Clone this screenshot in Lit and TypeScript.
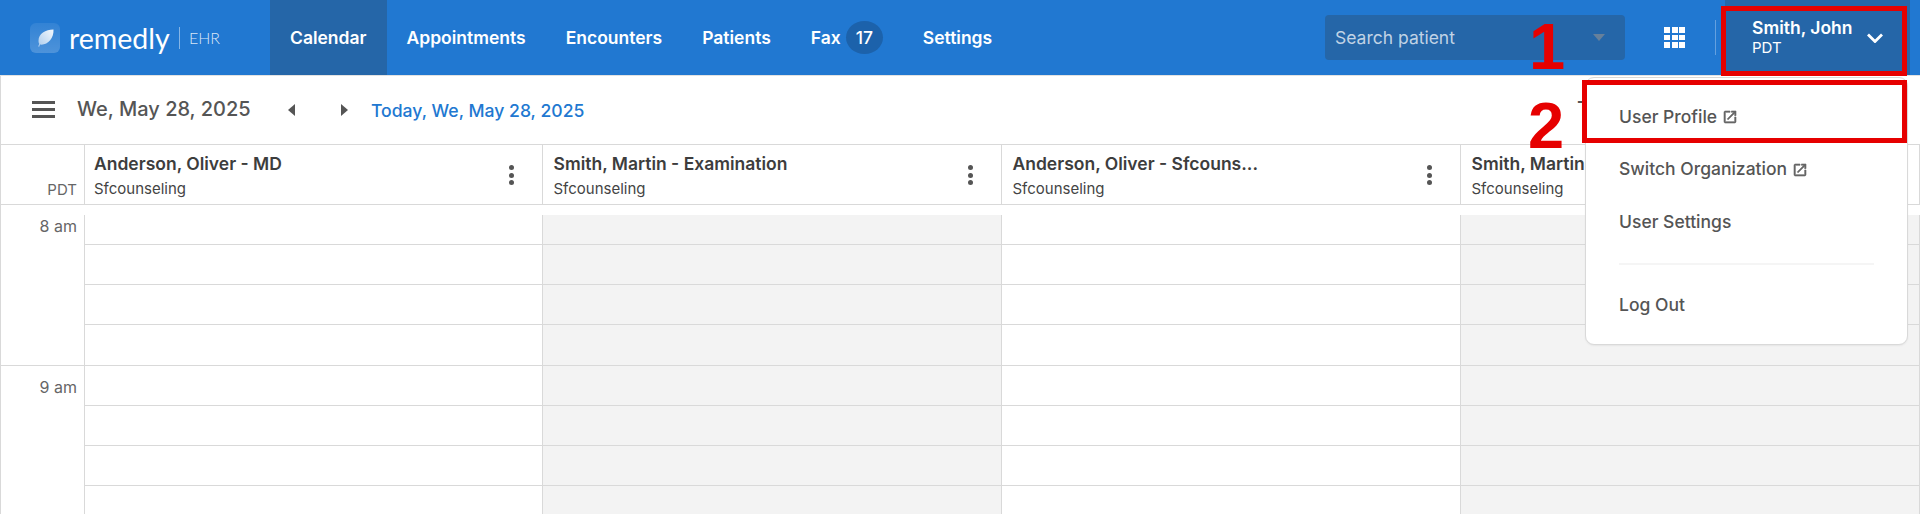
import { LitElement, html, css, svg } from "lit";
import { customElement } from "lit/decorators.js";

const ext = html`<svg class="ext" viewBox="0 0 24 24" width="16" height="16" fill="currentColor" stroke="currentColor" stroke-width="0.9"><path d="M19 19H5V5h7V3H5a2 2 0 0 0-2 2v14a2 2 0 0 0 2 2h14c1.1 0 2-.9 2-2v-7h-2v7zM14 3v2h3.59l-9.83 9.83 1.41 1.41L19 6.41V10h2V3h-7z"/></svg>`;

const COLS = [
  { name: "Anderson, Oliver - MD", off: false },
  { name: "Smith, Martin - Examination", off: true },
  { name: "Anderson, Oliver - Sfcouns...", off: false },
  { name: "Smith, Martin", off: true },
];

@customElement("app-root")
export class AppRoot extends LitElement {
  static styles = css`
    :host {
      display: block;
      position: relative;
      height: 514px;
      overflow: hidden;
      background: #fff;
      font-family: Inter, "Liberation Sans", sans-serif;
      color: #555;
    }
    * { box-sizing: border-box; }
    .top {
      display: flex;
      align-items: stretch;
      height: 76px;
      background: #2178d1;
      border-bottom: 1px solid #e2e2e2;
      color: #fff;
    }
    .brand {
      width: 270px;
      padding-left: 30px;
      display: flex;
      align-items: center;
    }
    .logo-box { width: 30px; height: 30px; flex: none; display: block; }
    .word {
      font-family: Lato, sans-serif;
      font-weight: 400;
      font-size: 28.5px;
      line-height: 30px;
      margin-left: 9px;
      width: 110px;
    }
    .brand-sep { width: 1px; height: 22px; background: rgba(255,255,255,.45); }
    .ehr {
      font-family: Lato, sans-serif;
      font-weight: 300;
      font-size: 16px;
      margin-left: 9px;
      color: rgba(255,255,255,.85);
    }
    .nav { display: flex; }
    .tab {
      display: flex;
      align-items: center;
      padding: 0 20px;
      font-size: 17.5px;
      font-weight: 600;
      gap: 5px;
    }
    .tab.active { background: #2566a8; }
    .badge {
      width: 37px;
      height: 33px;
      border-radius: 50%;
      background: #1c62ab;
      display: flex;
      align-items: center;
      justify-content: center;
      font-weight: 500;
    }
    .spacer { flex: 1; }
    .search {
      align-self: center;
      width: 300px;
      height: 45px;
      border-radius: 4px;
      background: #2566a8;
      display: flex;
      align-items: center;
      justify-content: space-between;
      padding: 0 20px 0 10px;
      color: rgba(255,255,255,.72);
      font-size: 17.5px;
    }
    .caret {
      width: 0;
      height: 0;
      border-left: 6.5px solid transparent;
      border-right: 6.5px solid transparent;
      border-top: 7px solid #66809b;
    }
    .apps {
      align-self: center;
      margin-left: 39px;
      display: grid;
      grid-template-columns: repeat(3, 6px);
      grid-auto-rows: 5.5px;
      gap: 2px 1.5px;
    }
    .apps i { background: #fff; display: block; }
    .vsep {
      align-self: center;
      width: 1px;
      height: 35px;
      margin-left: 30px;
      background: rgba(255,255,255,.3);
    }
    .user {
      margin-left: 9px;
      margin-right: 10px;
      width: 185px;
      background: #2566a8;
      display: flex;
      align-items: center;
      justify-content: space-between;
      padding: 0 27px 0 27px;
    }
    .user-name { font-size: 17.5px; font-weight: 600; line-height: 20px; }
    .user-tz { font-size: 15px; line-height: 20px; }
    .main { border-left: 1px solid #d9d9d9; }
    .bar {
      height: 68px;
      display: flex;
      align-items: center;
      padding-left: 31px;
      position: relative;
    }
    .burger { width: 23px; display: flex; flex-direction: column; gap: 4.5px; margin-top: -1px; }
    .burger i { display: block; height: 2.5px; background: #555; }
    .date { font-size: 20px; font-weight: 500; margin-left: 22px; width: 211px; margin-top: -2px; }
    .tri { width: 0; height: 0; border-top: 6px solid transparent; border-bottom: 6px solid transparent; }
    .tri.l { border-right: 7px solid #555; }
    .tri.r { border-left: 7px solid #555; margin-left: 46px; }
    .today { color: #2178d1; font-size: 17.6px; font-weight: 500; margin-left: 23px; }
    .bar-right { margin-left: auto; margin-right: 330px; font-size: 20px; font-weight: 500; margin-top: -2px; }
    .row {
      display: grid;
      grid-template-columns: 83px repeat(4, 459px);
    }
    .head {
      height: 61px;
      border-top: 1px solid #d9d9d9;
      border-bottom: 1px solid #d9d9d9;
    }
    .tz {
      font-size: 15px;
      color: #666;
      text-align: right;
      padding: 35px 7px 0 0;
    }
    .hcell {
      border-right: 1px solid #d9d9d9;
      display: flex;
      align-items: center;
      padding: 0 28px 0 10.5px;
      justify-content: space-between;
      min-width: 0;
    }
    .hcell.first { padding-left: 9px; }
    .hcell.first, .cell.first { border-left: 1px solid #d9d9d9; }
    .htext { min-width: 0; margin-top: 3px; }
    .hname {
      font-size: 17.5px;
      font-weight: 600;
      color: #3d3d3d;
      line-height: 20px;
      white-space: nowrap;
    }
    .hsub { font-size: 15px; color: #444; line-height: 20px; margin-top: 5px; }
    .kebab { display: flex; flex-direction: column; gap: 2.5px; margin-top: 1px; }
    .kebab i { width: 5px; height: 5px; border-radius: 50%; background: #555; display: block; }
    .time {
      font-size: 16px;
      color: #666;
      text-align: right;
      padding: 11px 7px 0 0;
      line-height: 20px;
      border-bottom: 1px solid #d9d9d9;
    }
    .cell { border-right: 1px solid #d9d9d9; }
    .cell.off { background: #f3f3f3; }
    .cell.lead { margin-top: 10px; }
    .slot { height: 40px; border-bottom: 1px solid #d9d9d9; }
    .slot:last-child { height: 41px; }
    .cell.lead .slot:first-child { height: 30px; }
    .menu {
      position: absolute;
      left: 1585px;
      top: 77px;
      width: 323px;
      height: 268px;
      background: #fff;
      border: 1px solid #d9d9d9;
      border-radius: 9px;
      padding: 12px 33px;
      box-shadow: 0 1px 2px rgba(0,0,0,.06);
      font-size: 17.5px;
      font-weight: 500;
      color: #555;
    }
    .item { height: 52.5px; display: flex; align-items: center; gap: 5px; }
    .ext { color: #666; margin-top: 2px; }
    .rule { height: 2px; background: #f5f5f5; margin: 15px 0 14px; }
    .mark { position: absolute; border: 5px solid #e60000; pointer-events: none; }
    .mark.a { left: 1721px; top: 6px; width: 186px; height: 70px; }
    .mark.b { left: 1582px; top: 80px; width: 325px; height: 63px; }
    .num {
      position: absolute;
      font-family: "Liberation Sans", sans-serif;
      font-weight: 700;
      font-size: 65px;
      line-height: 65px;
      color: #e60000;
    }
    .num.a { left: 1529px; top: 14px; }
    .num.b { left: 1528px; top: 93px; }
  `;

  private slots() {
    return html`<div class="slot"></div><div class="slot"></div><div class="slot"></div><div class="slot"></div>`;
  }

  private hour(label: string, lead: boolean) {
    return html`<div class="row">
      <div class="time">${label}</div>
      ${COLS.map(
        (c, i) => html`<div class="cell ${i === 0 ? "first" : ""} ${c.off ? "off" : ""} ${lead ? "lead" : ""}">${this.slots()}</div>`
      )}
    </div>`;
  }

  render() {
    return html`
      <div class="top">
        <div class="brand">
          <svg class="logo-box" viewBox="0 0 30 30">
            <defs>
              <linearGradient id="lb" x1="0" y1="0" x2="0" y2="1">
                <stop offset="0" stop-color="#fff" stop-opacity=".08" />
                <stop offset="1" stop-color="#fff" stop-opacity=".2" />
              </linearGradient>
              <linearGradient id="lf" x1="1" y1="0" x2="0" y2="1">
                <stop offset="0" stop-color="#fff" stop-opacity=".95" />
                <stop offset="1" stop-color="#fff" stop-opacity=".55" />
              </linearGradient>
            </defs>
            <rect width="30" height="30" rx="6" fill="url(#lb)" />
            ${svg`<path d="M23.5 6.5C15.5 6.500 8.500 10.500 8.500 18c0 1.200.3 2.200.8 3-.5.8-.9 1.700-1.100 2.500l1 .3c.2-.8.6-1.500 1-2.200C17.500 22.500 24 15.500 23.500 6.500z" fill="url(#lf)"/>`}
          </svg>
          <div class="word">remedly</div>
          <div class="brand-sep"></div>
          <div class="ehr">EHR</div>
        </div>
        <div class="nav">
          <div class="tab active">Calendar</div>
          <div class="tab">Appointments</div>
          <div class="tab">Encounters</div>
          <div class="tab">Patients</div>
          <div class="tab">Fax<span class="badge">17</span></div>
          <div class="tab">Settings</div>
        </div>
        <div class="spacer"></div>
        <div class="search"><span>Search patient</span><span class="caret"></span></div>
        <div class="apps">${Array.from({ length: 9 }, () => html`<i></i>`)}</div>
        <div class="vsep"></div>
        <div class="user">
          <div>
            <div class="user-name">Smith, John</div>
            <div class="user-tz">PDT</div>
          </div>
          <svg width="16" height="10" viewBox="0 0 16 10" fill="none" stroke="#fff" stroke-width="2.800"><path d="M1 1.500l7 7 7-7" /></svg>
        </div>
      </div>
      <div class="main">
        <div class="bar">
          <div class="burger"><i></i><i></i><i></i></div>
          <div class="date">We, May 28, 2025</div>
          <div class="tri l"></div>
          <div class="tri r"></div>
          <div class="today">Today, We, May 28, 2025</div>
          <div class="bar-right">T</div>
        </div>
        <div class="row head">
          <div class="tz">PDT</div>
          ${COLS.map(
            (c, i) => html`<div class="hcell ${i === 0 ? "first" : ""}">
              <div class="htext">
                <div class="hname">${c.name}</div>
                <div class="hsub">Sfcounseling</div>
              </div>
              <div class="kebab"><i></i><i></i><i></i></div>
            </div>`
          )}
        </div>
        ${this.hour("8 am", true)}
        ${this.hour("9 am", false)}
      </div>
      <div class="menu">
        <div class="item">User Profile ${ext}</div>
        <div class="item">Switch Organization ${ext}</div>
        <div class="item">User Settings</div>
        <div class="rule"></div>
        <div class="item">Log Out</div>
      </div>
      <div class="mark a"></div>
      <div class="mark b"></div>
      <div class="num a">1</div>
      <div class="num b">2</div>
    `;
  }
}
